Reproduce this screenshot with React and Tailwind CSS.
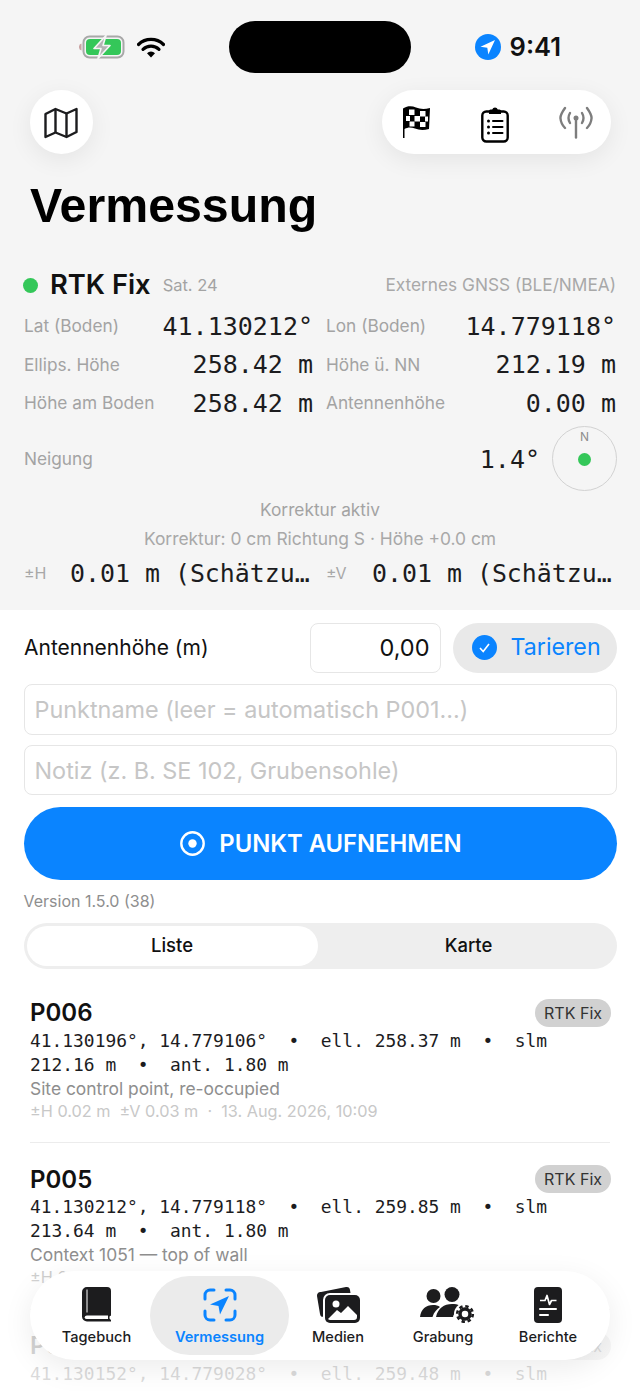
import React from 'react';

const mono = "font-['DejaVu_Sans_Mono',monospace]";

const BatteryIcon = () => (
    <svg width="46" height="24" viewBox="0 0 46 24" fill="none">
        <path d="M2.5 8.5A3.5 3.5 0 000 12a3.5 3.5 0 002.5 3.5z" fill="#c9a3a3" />
        <rect x="4.5" y="1.5" width="40" height="21" rx="6" stroke="#a8a8a8" strokeWidth="2" />
        <rect x="7" y="4" width="35" height="16" rx="4" fill="#34c759" />
        <path d="M27 0.5L15 13.5h7L19 23.5l12-13h-7z" fill="#b4b4b4" stroke="#f5f5f5" strokeWidth="1.6" strokeLinejoin="round" />
    </svg>
);

const WifiIcon = () => (
    <svg width="28" height="21" viewBox="0 0 28 21" fill="none">
        <path d="M1.5 7.5a18 18 0 0125 0" stroke="#000" strokeWidth="3.2" strokeLinecap="round" />
        <path d="M6 12.3a11.5 11.5 0 0116 0" stroke="#000" strokeWidth="3.2" strokeLinecap="round" />
        <path d="M10 16.3l4 4.2 4-4.2a5.6 5.6 0 00-8 0z" fill="#000" />
    </svg>
);

const LocationDot = () => (
    <svg width="26" height="26" viewBox="0 0 26 26">
        <circle cx="13" cy="13" r="13" fill="#0a84ff" />
        <path d="M20 6L5.5 12.8l6.8 1 1 6.8z" fill="#fff" />
    </svg>
);

const MapIcon = () => (
    <svg className="mt-[2px]" width="34" height="32" viewBox="0 0 34 32" fill="none" stroke="#1c1c1e" strokeWidth="2.4" strokeLinejoin="round">
        <path d="M1.5 7L11.5 2l11 4.5 10-4.5v23l-10 5-11-4.5-10 4.5z" />
        <path d="M11.5 2v23.5M22.5 6.5V30" />
    </svg>
);

const FlagIcon = () => (
    <svg className="-mt-[1px]" width="30" height="34" viewBox="0 0 30 34">
        <path d="M2 33V3.5C7 0.5 11 1 15 2.5c4 1.5 8 2 14 0.5l-1 21c-6 1.500-10 1-14-.5-4-1.500-7-1.500-10.500.5V33z" fill="#000" />
        <g fill="#fff">
            <rect x="8" y="4.500" width="5.500" height="5.500" />
            <rect x="19" y="6" width="5.500" height="5.500" />
            <rect x="5" y="11" width="4" height="5" />
            <rect x="13.500" y="11" width="5.500" height="5.500" />
            <rect x="24" y="11.500" width="3" height="5" />
            <rect x="8.500" y="16.500" width="5" height="5" />
            <rect x="19" y="17" width="5.500" height="5" />
        </g>
    </svg>
);

const ClipboardIcon = () => (
    <svg className="mt-[5px]" width="28" height="37" viewBox="0 0 28 37" fill="none">
        <rect x="1.300" y="5.500" width="25.400" height="30" rx="4" stroke="#000" strokeWidth="2.400" />
        <path d="M8 8V5a1.500 1.500 0 011.500-1.500h1.700a3 3 0 015.600 0h1.700A1.500 1.500 0 0120 5v3z" fill="#000" />
        <circle cx="7.500" cy="15" r="1.500" fill="#000" />
        <circle cx="7.500" cy="21" r="1.500" fill="#000" />
        <circle cx="7.500" cy="27" r="1.500" fill="#000" />
        <path d="M12 15h9.500M12 21h9.500M12 27h9.500" stroke="#000" strokeWidth="2" strokeLinecap="round" />
    </svg>
);

const AntennaIcon = () => (
    <svg width="34" height="33" viewBox="0 0 34 33" fill="none" stroke="#7d7d7d" strokeWidth="2.400" strokeLinecap="round">
        <path d="M6 2Q1 9 1.500 12.500 2 18 6 22" />
        <path d="M28 2q5 7 4.500 10.500Q32 18 28 22" />
        <path d="M11 7q-3 5 0 10M23 7q3 5 0 10" />
        <path d="M17 12v19.500" />
        <circle cx="17" cy="12" r="2.500" fill="#7d7d7d" stroke="none" />
    </svg>
);

const BookIcon = () => (
    <svg width="30" height="36" viewBox="0 0 30 36">
        <path d="M5 0h20a4 4 0 014 4v24.500l-1.500 1v2l1.500 1.500v1.500H5a5 5 0 01-5-5V5a5 5 0 015-5z" fill="#1c1c1e" />
        <path d="M5 2.500v23" stroke="#fff" strokeWidth="1" />
        <path d="M2.500 30.500A2.500 2.500 0 015 28.500h21v3.500H5a2.500 2.500 0 01-2.500-1.500z" fill="#fff" />
    </svg>
);

const ScanIcon = () => (
    <svg width="34" height="34" viewBox="0 0 34 34" fill="none">
        <path d="M2 11V7a5 5 0 015-5h4M23 2h4a5 5 0 015 5v4M32 23v4a5 5 0 01-5 5h-4M11 32H7a5 5 0 01-5-5v-4" stroke="#0a84ff" strokeWidth="3" strokeLinecap="round" />
        <path d="M26 8L7 16.500l8.500 1.500 1.500 8.500z" fill="#0a84ff" />
    </svg>
);

const PhotosIcon = () => (
    <svg width="44" height="37" viewBox="0 0 44 37">
        <path d="M5 6L30 1a3.500 3.500 0 014 3l.5 3H14a7 7 0 00-7 7v16.500l-1 .5a3.500 3.500 0 01-2-3L1 10a3.500 3.500 0 014-4z" fill="#1c1c1e" />
        <rect x="9" y="9" width="35" height="28" rx="5" fill="#1c1c1e" />
        <rect x="12" y="12" width="29" height="22" rx="3" fill="#1c1c1e" />
        <path d="M12 33l9-9 4 3 7-7 9 9v2a3 3 0 01-3 3H15a3 3 0 01-3-1z" fill="#fff" />
        <circle cx="20" cy="18" r="3.500" fill="#fff" />
    </svg>
);

const TeamIcon = () => (
    <svg className="mt-[3px] ml-[10px]" width="56" height="38" viewBox="0 0 56 38">
        <circle cx="13.500" cy="9" r="7" fill="#1c1c1e" />
        <circle cx="32" cy="7.500" r="7.500" fill="#1c1c1e" />
        <path d="M0 30c1-8 6-12 13-12 3 0 5 .5 7 2-3 2-6 5-7.500 10z" fill="#1c1c1e" />
        <path d="M16 30c2-9 8-13 16-13 6 0 10 2 12 5-5 0-10 3-11 8z" fill="#1c1c1e" />
        <circle cx="45" cy="27" r="11" fill="#fff" />
        <circle cx="45" cy="27" r="5" fill="none" stroke="#1c1c1e" strokeWidth="3.500" />
        <circle cx="45" cy="27" r="7.800" fill="none" stroke="#1c1c1e" strokeWidth="2.600" strokeDasharray="3.400 2.730" />
    </svg>
);

const ReportIcon = () => (
    <svg width="28" height="36" viewBox="0 0 28 36" fill="none">
        <rect width="28" height="36" rx="4" fill="#1c1c1e" />
        <path d="M6 13.500h5l2-5 2.500 9 2-4h5" stroke="#fff" strokeWidth="1.700" strokeLinejoin="round" />
        <path d="M6 22h16" stroke="#fff" strokeWidth="2" strokeLinecap="round" />
        <path d="M6 28h8" stroke="#fff" strokeWidth="2" strokeLinecap="round" />
    </svg>
);

const Reading = ({ label, value }) => (
    <div className="flex h-[38.500px] items-center justify-between">
        <span className="text-[17.25px] text-[#a3a3a3]">{label}</span>
        <span className={`${mono} text-[25px] text-[#1c1c1e] whitespace-pre`}>{value}</span>
    </div>
);

const Accuracy = ({ label, value }) => (
    <div className="flex min-w-0 items-center">
        <span className="w-[46px] shrink-0 text-[16px] text-[#a8a8a8]">{label}</span>
        <span className={`${mono} min-w-0 flex-1 truncate text-[24.9px] text-[#1c1c1e] whitespace-pre`}>{value}</span>
    </div>
);

const points = [
    {
        name: 'P006',
        coords: '41.130196°, 14.779106°  •  ell. 258.37 m  •  slm 212.16 m  •  ant. 1.80 m',
        note: 'Site control point, re-occupied',
        meta: '±H 0.02 m  ±V 0.03 m  ·  13. Aug. 2026, 10:09',
    },
    {
        name: 'P005',
        coords: '41.130212°, 14.779118°  •  ell. 259.85 m  •  slm 213.64 m  •  ant. 1.80 m',
        note: 'Context 1051 — top of wall',
        meta: '±H 0.02 m  ±V 0.03 m  ·  13. Aug. 2026, 09:52',
    },
    {
        name: 'P004',
        coords: '41.130152°, 14.779028°  •  ell. 259.48 m  •  slm 213.27 m  •  ant. 1.80 m',
        note: '',
        meta: '',
    },
];

const PointRow = ({ point, last }) => (
    <div className={`pt-[19px] pb-[20.500px] ${last ? '' : 'border-b border-[#ececec]'}`}>
        <div className="flex h-[34px] items-center justify-between">
            <span className="pt-px text-[24px] font-semibold text-[#111]">{point.name}</span>
            <span className="-mr-px rounded-full bg-[#d1d1d1] px-[9px] py-[2px] text-[16px] text-[#333]">RTK Fix</span>
        </div>
        <p className={`${mono} -mt-px text-[17.9px] leading-[24px] text-[#1c1c1e] whitespace-pre-wrap`}>{point.coords}</p>
        <p className="h-[24px] text-[17.4px] leading-[24px] text-[#8e8e8e]">{point.note}</p>
        <p className="-mt-px h-[22px] text-[16.25px] leading-[22px] text-[#c8c8c8] whitespace-pre">{point.meta}</p>
    </div>
);

const tabs = [
    { label: 'Tagebuch', icon: <BookIcon />, width: 'w-[107px]' },
    { label: 'Vermessung', icon: <ScanIcon />, width: 'w-[139px]', active: true },
    { label: 'Medien', icon: <PhotosIcon />, width: 'w-[98px]' },
    { label: 'Grabung', icon: <TeamIcon />, width: 'w-[112px]' },
    { label: 'Berichte', icon: <ReportIcon />, width: 'w-[98px]' },
];

export default function App() {
    return (
        <div className="relative h-[1391px] w-[640px] overflow-hidden bg-white font-['Inter',sans-serif]">
            <div className="bg-[#f5f5f5] px-[24px] pb-[19px]">
                {/* Status bar */}
                <div className="relative flex h-[90px] items-start">
                    <div className="mt-[35px] ml-[55px] flex items-center gap-[12px]">
                        <BatteryIcon />
                        <WifiIcon />
                    </div>
                    <div className="absolute top-[21px] left-[205px] h-[52px] w-[182px] rounded-full bg-black" />
                    <div className="mt-[34px] ml-auto mr-[55px] flex items-center gap-[9px]">
                        <LocationDot />
                        <span className="text-[25.5px] leading-[26px] font-semibold text-[#111]">9:41</span>
                    </div>
                </div>

                {/* Header actions */}
                <div className="flex h-[64px] items-center justify-between pr-[5px] pl-[6px]">
                    <button className="flex h-[64px] w-[63px] items-center justify-center rounded-full bg-white pr-[2px] shadow-[0_6px_24px_rgba(0,0,0,0.07)]">
                        <MapIcon />
                    </button>
                    <div className="flex h-[64px] w-[229px] items-center justify-between rounded-full bg-white pr-[18px] pl-[19px] shadow-[0_6px_24px_rgba(0,0,0,0.07)]">
                        <FlagIcon />
                        <ClipboardIcon />
                        <AntennaIcon />
                    </div>
                </div>

                <h1 className="mt-[22px] h-[58px] pl-[6px] font-['Liberation_Sans',sans-serif] text-[48.3px] leading-[58px] font-bold text-black">Vermessung</h1>

                {/* GNSS status */}
                <div className="mt-[34px] flex h-[34px] items-center">
                    <span className="-ml-px h-[15px] w-[15px] rounded-full bg-[#34c759]" />
                    <span className="ml-[12px] text-[27.3px] font-semibold text-[#111]">RTK Fix</span>
                    <span className="ml-[12px] text-[16.5px] text-[#a3a3a3]">Sat. 24</span>
                    <span className="ml-auto text-[17.25px] text-[#a8a8a8]">Externes GNSS (BLE/NMEA)</span>
                </div>

                <div className="mt-[5px] grid grid-cols-[289px_1fr] gap-x-[13px]">
                    <Reading label="Lat (Boden)" value="41.130212°" />
                    <Reading label="Lon (Boden)" value="14.779118°" />
                    <Reading label="Ellips. Höhe" value="258.42 m" />
                    <Reading label="Höhe ü. NN" value="212.19 m" />
                    <Reading label="Höhe am Boden" value="258.42 m" />
                    <Reading label="Antennenhöhe" value="0.00 m" />
                </div>

                <div className="mt-[3px] flex h-[65px] items-center">
                    <span className="pt-px text-[17.25px] text-[#a3a3a3]">Neigung</span>
                    <span className={`${mono} ml-auto pt-[3px] text-[25px] text-[#1c1c1e]`}>1.4°</span>
                    <div className="relative -mr-px ml-[12px] flex h-[65px] w-[65px] items-center justify-center rounded-full border border-[#d2d2d2]">
                        <span className="absolute top-[1px] left-0 w-full text-center text-[12px] text-[#8e8e8e]">N</span>
                        <span className="mt-[3px] h-[13px] w-[13px] rounded-full bg-[#34c759]" />
                    </div>
                </div>

                <p className="mt-[7px] h-[24px] text-center text-[17.3px] leading-[24px] text-[#a3a3a3]">Korrektur aktiv</p>
                <p className="mt-[5px] h-[24px] text-center text-[17.4px] leading-[24px] text-[#a8a8a8]">Korrektur: 0 cm Richtung S · Höhe +0.0 cm</p>

                <div className="mt-[4px] grid h-[36px] grid-cols-[289px_1fr] gap-x-[13px]">
                    <Accuracy label="±H" value="0.01 m (Schätzung)" />
                    <Accuracy label="±V" value="0.01 m (Schätzung)" />
                </div>
            </div>

            {/* Capture form */}
            <div className="px-[23.500px] pt-[13px]">
                <div className="flex h-[50px] items-center">
                    <span className="pl-[.5px] text-[21px] text-[#111]">Antennenhöhe (m)</span>
                    <input
                        readOnly
                        value="0,00"
                        className="ml-auto h-full w-[131px] rounded-[8px] border border-[#e6e6e6] bg-white pr-[10px] text-right text-[23.5px] text-[#111] outline-none"
                    />
                    <button className="ml-[12px] flex h-full w-[164px] items-center gap-[14px] rounded-full bg-[#e9e9e9] pl-[19px]">
                        <svg width="25" height="25" viewBox="0 0 25 25" fill="none">
                            <circle cx="12.500" cy="12.500" r="12.500" fill="#0a84ff" />
                            <path d="M8 13l3.200 3.500L17 9" stroke="#fff" strokeWidth="1.600" />
                        </svg>
                        <span className="text-[23.2px] text-[#0a84ff]">Tarieren</span>
                    </button>
                </div>

                <input
                    placeholder="Punktname (leer = automatisch P001...)"
                    className="mt-[11px] block h-[51px] w-full rounded-[8px] border border-[#e6e6e6] bg-white px-[10px] pt-px text-[23.4px] outline-none placeholder:text-[#c6c6c6]"
                />
                <input
                    placeholder="Notiz (z. B. SE 102, Grubensohle)"
                    className="mt-[10px] block h-[50px] w-full rounded-[8px] border border-[#e6e6e6] bg-white px-[10px] pt-[2px] text-[23.4px] outline-none placeholder:text-[#c6c6c6]"
                />

                <button className="mt-[12px] flex h-[73px] w-full items-center justify-center gap-[14px] rounded-full bg-[#0a84ff] pl-[2px]">
                    <svg width="25" height="25" viewBox="0 0 25 25" fill="none">
                        <circle cx="12.500" cy="12.500" r="11.200" stroke="#fff" strokeWidth="2.400" />
                        <circle cx="12.500" cy="12.500" r="4.200" fill="#fff" />
                    </svg>
                    <span className="pt-px text-[23.8px] font-semibold text-white">PUNKT AUFNEHMEN</span>
                </button>

                <p className="mt-[11px] h-[20px] text-[16px] leading-[20px] text-[#8e8e8e]">Version 1.5.0 (38)</p>

                {/* List / map switch */}
                <div className="mt-[12px] grid h-[46px] grid-cols-[291px_1fr] rounded-full bg-[#eeeeee] p-[3px]">
                    <button className="rounded-full bg-white pt-px text-[18.5px] font-medium text-[#111]">Liste</button>
                    <button className="pt-px pl-[6px] text-[18.5px] font-medium text-[#111]">Karte</button>
                </div>
            </div>

            <div className="mt-[8px] px-[30px]">
                {points.map((point, i) => (
                    <PointRow key={point.name} point={point} last={i === points.length - 1} />
                ))}
            </div>

            <div className="absolute inset-x-0 bottom-0 h-[125px] bg-linear-to-b from-white/0 via-white/80 to-white/85" />

            {/* Tab bar */}
            <nav className="absolute bottom-[31px] left-[30px] flex h-[89px] w-[580px] items-center rounded-full bg-white pl-[13px] shadow-[0_8px_30px_rgba(0,0,0,0.08)]">
                {tabs.map((tab) => (
                    <div
                        key={tab.label}
                        className={`flex h-[79px] ${tab.width} flex-col items-center rounded-full ${tab.active ? 'bg-[#ebebeb] text-[#0a84ff]' : 'text-[#1c1c1e]'}`}
                    >
                        <div className="flex h-[51px] items-center pt-[6px]">{tab.icon}</div>
                        <span className={`text-[14.6px] leading-[20px] ${tab.active ? 'font-semibold' : 'font-medium'}`}>{tab.label}</span>
                    </div>
                ))}
            </nav>
        </div>
    );
}
